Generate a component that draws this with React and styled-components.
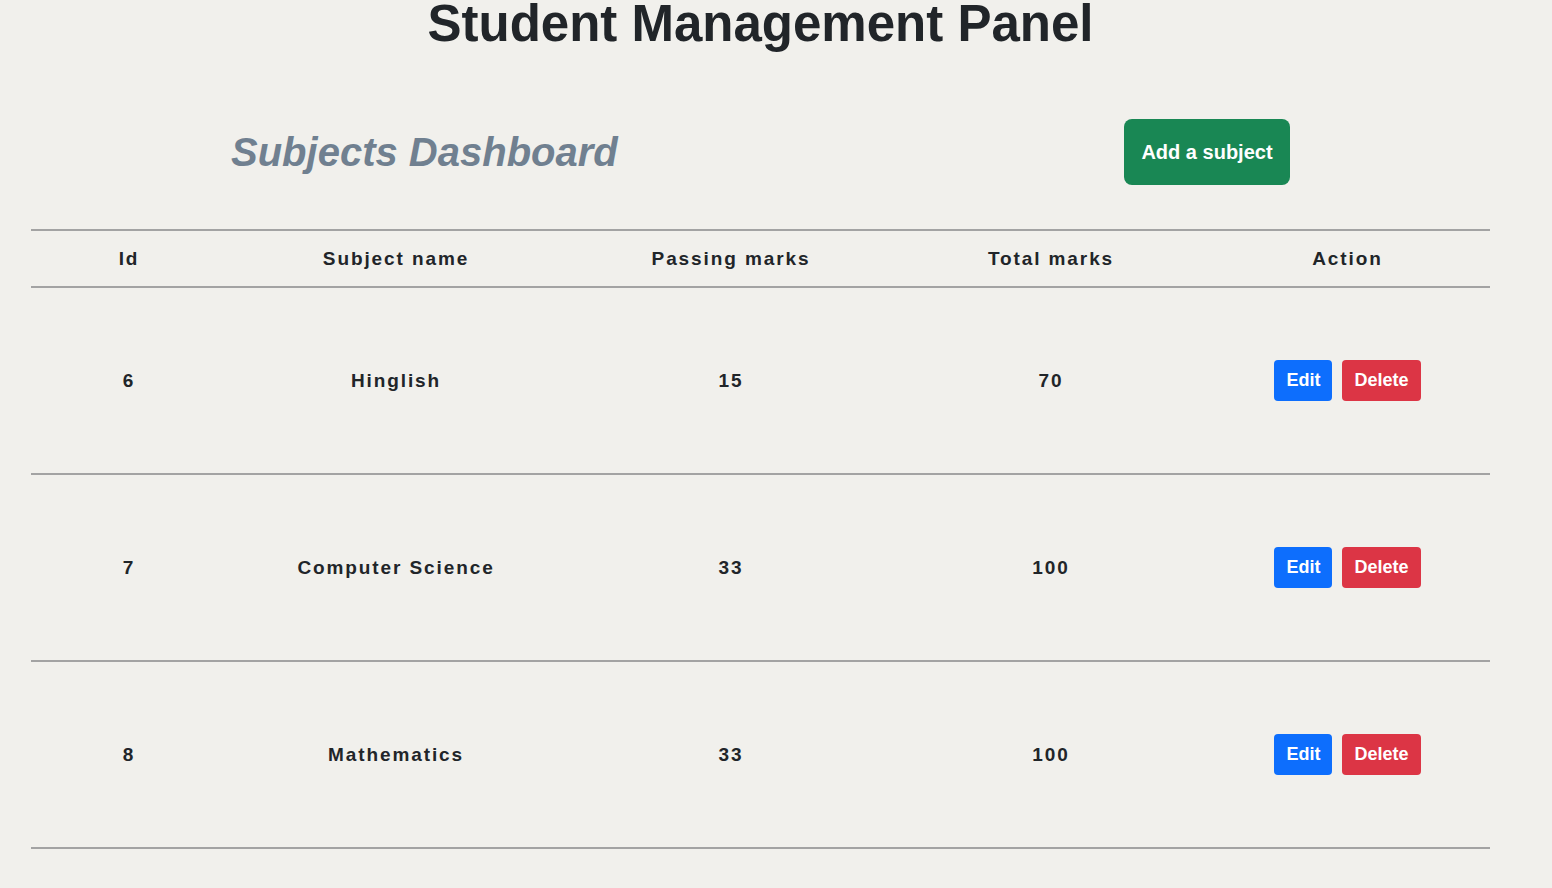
import React from 'react';
import styled, { createGlobalStyle } from 'styled-components';

const GlobalStyle = createGlobalStyle`
  html, body {
    margin: 0;
    padding: 0;
    background: #f1f0ec;
  }

  body {
    font-family: "Liberation Sans", Arial, sans-serif;
    color: #212529;
  }
`;

const subjects = [
  { id: 6, name: 'Hinglish', passing: 15, total: 70 },
  { id: 7, name: 'Computer Science', passing: 33, total: 100 },
  { id: 8, name: 'Mathematics', passing: 33, total: 100 },
];

const Page = styled.div`
  width: 1521px;
  height: 888px;
  overflow: hidden;
`;

const Title = styled.h1`
  margin: 0;
  padding-top: 1px;
  font-size: 51px;
  line-height: 46px;
  font-weight: 700;
  text-align: center;
  color: #212529;
`;

const Panel = styled.div`
  margin: 0 31px;
`;

const Toolbar = styled.div`
  display: flex;
  align-items: center;
  justify-content: space-between;
  padding: 0 200px;
  margin-top: 72px;
  height: 66px;
`;

const Heading = styled.h2`
  margin: 0;
  font-size: 40px;
  font-style: italic;
  font-weight: 700;
  color: #708090;
`;

const Button = styled.button`
  border: none;
  color: #fff;
  font-family: inherit;
  font-weight: 700;
  cursor: pointer;
  background: ${({ $variant }) => ({
    success: '#198754',
    primary: '#0d6efd',
    danger: '#dc3545',
  })[$variant]};
`;

const AddButton = styled(Button)`
  width: 166px;
  height: 66px;
  border-radius: 8px;
  font-size: 20px;
`;

const SmallButton = styled(Button)`
  height: 41px;
  padding: 0 12px;
  border-radius: 4px;
  font-size: 18px;
`;

const Table = styled.table`
  width: 100%;
  margin-top: 44px;
  border-collapse: collapse;
  table-layout: fixed;
`;

const HeadCell = styled.th`
  height: 55px;
  padding: 0;
  border-top: 2px solid #a3a3a3;
  border-bottom: 2px solid #a3a3a3;
  font-size: 19px;
  font-weight: 700;
  letter-spacing: 1.9px;
  text-align: center;
`;

const Cell = styled.td`
  height: 185px;
  padding: 0;
  border-bottom: 2px solid #a3a3a3;
  font-size: 19px;
  font-weight: 700;
  letter-spacing: 1.9px;
  text-align: center;
`;

const Actions = styled.div`
  display: flex;
  justify-content: center;
  gap: 10px;
  letter-spacing: 0;
`;

const columns = [
  { label: 'Id', width: 196 },
  { label: 'Subject name', width: 338 },
  { label: 'Passing marks', width: 332 },
  { label: 'Total marks', width: 308 },
  { label: 'Action', width: 285 },
];

const App = () => (
  <Page>
    <GlobalStyle />
    <Title>Student Management Panel</Title>

    <Panel>
      <Toolbar>
        <Heading>Subjects Dashboard</Heading>
        <AddButton $variant="success">Add a subject</AddButton>
      </Toolbar>

      <Table>
        <colgroup>
          {columns.map(({ label, width }) => (
            <col key={label} style={{ width }} />
          ))}
        </colgroup>
        <thead>
          <tr>
            {columns.map(({ label }) => (
              <HeadCell key={label}>{label}</HeadCell>
            ))}
          </tr>
        </thead>
        <tbody>
          {subjects.map(({ id, name, passing, total }) => (
            <tr key={id}>
              <Cell>{id}</Cell>
              <Cell>{name}</Cell>
              <Cell>{passing}</Cell>
              <Cell>{total}</Cell>
              <Cell>
                <Actions>
                  <SmallButton $variant="primary">Edit</SmallButton>
                  <SmallButton $variant="danger">Delete</SmallButton>
                </Actions>
              </Cell>
            </tr>
          ))}
        </tbody>
      </Table>
    </Panel>
  </Page>
);

export default App;
